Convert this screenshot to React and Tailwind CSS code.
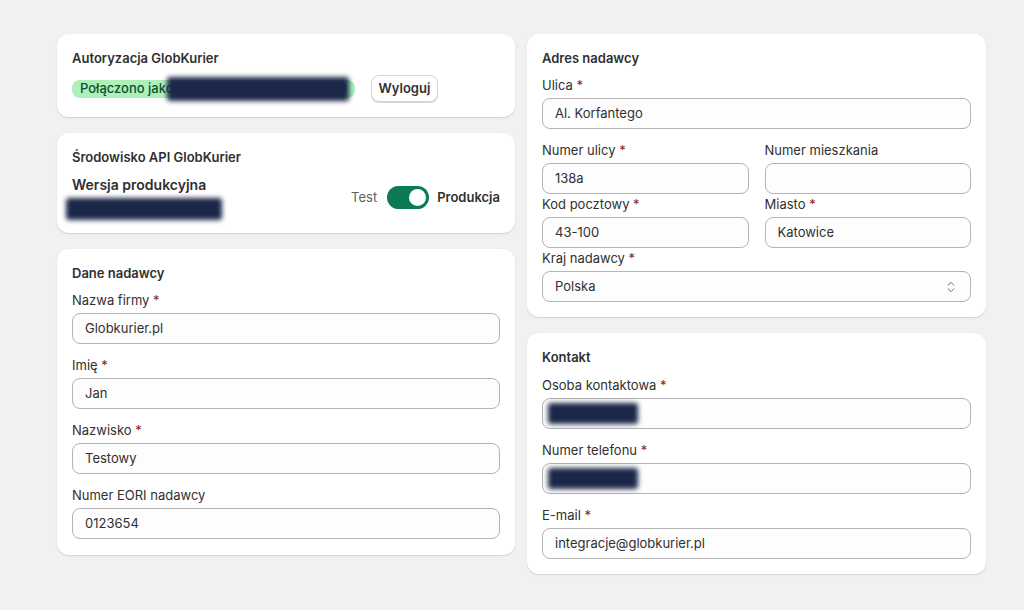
import { ChevronsUpDown } from 'lucide-react';

const font = { fontFamily: 'Inter, "Noto Sans", sans-serif' };

function Card({ title, children, className = '' }) {
  return (
    <div className={`bg-white rounded-xl px-[15px] pt-4 pb-[15px] shadow-[0_1px_0_0_rgba(26,26,26,0.08),0_1px_3px_rgba(0,0,0,0.07)] ${className}`}>
      <h2 className="text-[13px] leading-4 font-semibold text-[#303030]">{title}</h2>
      {children}
    </div>
  );
}

function Redacted({ className = '' }) {
  return <div className={`absolute bg-[#1b2748] rounded-[3px] blur-[2.5px] ${className}`} />;
}

function Field({ label, required, value = '', redacted, select }) {
  return (
    <div>
      <div className="text-[13px] leading-4 text-[#303030] mb-[5px]">
        {label}
        {required && <span className="text-[#8e1f0b]"> *</span>}
      </div>
      <div className="relative h-[31px] rounded-lg border border-[#b4b4b4] bg-[#fdfdfd] flex items-center px-3 text-[13px] text-[#303030]">
        <span className="flex-1">{value}</span>
        {select && <ChevronsUpDown size={14} strokeWidth={1.6} className="text-[#616161]" />}
        {redacted && <Redacted className="left-[5px] top-[4px] w-[90px] h-[21px]" />}
      </div>
    </div>
  );
}

export default function App() {
  return (
    <div style={font} className="min-h-[610px] bg-[#f1f1f1] pl-[57px] pt-[34px] flex gap-3 items-start">
      <div className="w-[458px] flex flex-col gap-4">
        <Card title="Autoryzacja GlobKurier">
          <div className="mt-[9px] flex items-center gap-4">
            <div className="relative">
              <div className="flex h-[18px] w-[283px] items-center justify-between overflow-hidden rounded-lg bg-[#aff0b8] px-2 text-[13px] font-medium text-[#0c5132] whitespace-nowrap">
                <span>Połączono jako</span>
                <span>pl</span>
              </div>
              <Redacted className="left-[95px] top-[-3px] w-[182px] h-[24px]" />
            </div>
            <button className="h-[27px] w-[67px] rounded-lg bg-white border border-[#d4d4d4] shadow-[0_1px_0_0_rgba(0,0,0,0.15)] text-[13px] font-semibold text-[#303030]">
              Wyloguj
            </button>
          </div>
        </Card>

        <Card title="Środowisko API GlobKurier" className="!pb-[13px]">
          <div className="mt-[10px] flex items-center justify-between">
            <div>
              <div className="text-[14px] leading-5 font-semibold text-[#303030]">Wersja produkcyjna</div>
              <div className="relative mt-[3px] h-[22px] w-[156px]">
                <Redacted className="-left-[6px] top-0 w-[156px] h-[22px]" />
              </div>
            </div>
            <div className="flex items-center text-[13px]">
              <span className="text-[#616161] mr-[10px]">Test</span>
              <div className="w-[42px] h-[23px] rounded-full bg-[#0c7a57] flex items-center justify-end pr-[3px] mr-[8px]">
                <div className="w-[17px] h-[17px] rounded-full bg-white" />
              </div>
              <span className="font-semibold text-[#303030]">Produkcja</span>
            </div>
          </div>
        </Card>

        <Card title="Dane nadawcy" className="!pb-4">
          <div className="mt-[11px] flex flex-col gap-[13px]">
            <Field label="Nazwa firmy" required value="Globkurier.pl" />
            <Field label="Imię" required value="Jan" />
            <Field label="Nazwisko" required value="Testowy" />
            <Field label="Numer EORI nadawcy" value="0123654" />
          </div>
        </Card>
      </div>

      <div className="w-[459px] flex flex-col gap-4">
        <Card title="Adres nadawcy">
          <div className="mt-[11px]">
            <Field label="Ulica" required value="Al. Korfantego" />
          </div>
          <div className="mt-[13px] grid grid-cols-2 gap-x-4 gap-y-[2px]">
            <Field label="Numer ulicy" required value="138a" />
            <Field label="Numer mieszkania" />
            <Field label="Kod pocztowy" required value="43-100" />
            <Field label="Miasto" required value="Katowice" />
          </div>
          <div className="mt-[2px]">
            <Field label="Kraj nadawcy" required value="Polska" select />
          </div>
        </Card>

        <Card title="Kontakt">
          <div className="mt-[12px] flex flex-col gap-[13px]">
            <Field label="Osoba kontaktowa" required redacted />
            <Field label="Numer telefonu" required redacted />
            <Field label="E-mail" required value="integracje@globkurier.pl" />
          </div>
        </Card>
      </div>
    </div>
  );
}
